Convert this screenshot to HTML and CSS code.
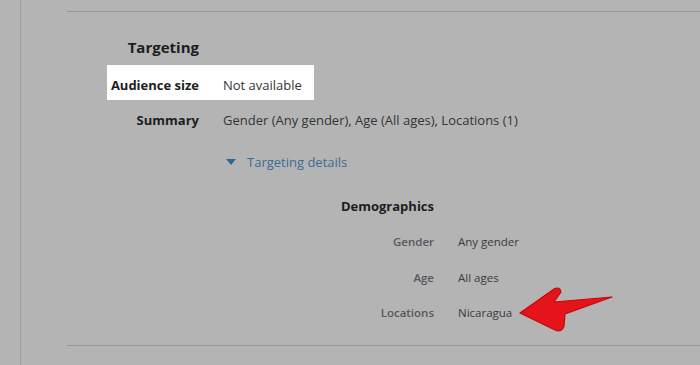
FILE: index.html
```html
<!DOCTYPE html>
<html lang="en">
<head>
    <meta charset="UTF-8">
    <meta name="viewport" content="width=device-width, initial-scale=1.0">
    <title>Targeting</title>
    <link rel="stylesheet" href="styles.css">
</head>
<body>
    <div class="panel">
        <div class="section">
            <div class="row heading">
                <div class="label">Targeting</div>
            </div>
            <div class="row highlight">
                <div class="label">Audience size</div>
                <div class="value">Not available</div>
            </div>
            <div class="row summary">
                <div class="label">Summary</div>
                <div class="value">Gender (Any gender), Age (All ages), Locations (1)</div>
            </div>
            <div class="row">
                <div class="label"></div>
                <div class="value">
                    <a class="toggle" href="#"><span class="caret"></span>Targeting details</a>
                </div>
            </div>
            <div class="row">
                <div class="label"></div>
                <div class="details">
                    <div class="drow dheading">
                        <div class="dlabel">Demographics</div>
                    </div>
                    <div class="drow">
                        <div class="dlabel">Gender</div>
                        <div class="dvalue">Any gender</div>
                    </div>
                    <div class="drow">
                        <div class="dlabel">Age</div>
                        <div class="dvalue">All ages</div>
                    </div>
                    <div class="drow">
                        <div class="dlabel">Locations</div>
                        <div class="dvalue pointed">Nicaragua
                            <svg class="arrow" width="100" height="50" viewBox="0 0 100 50">
                                <path d="M4 27 L38 3 Q44 0 45 6 L38 16 L96 11 L49 28 L48 40 Q46 47 39 44 Z" fill="#e5141a" stroke="#c4080d" stroke-width="1.2" stroke-linejoin="round"/>
                            </svg>
                        </div>
                    </div>
                </div>
            </div>
        </div>
    </div>
</body>
</html>
```

FILE: styles.css
```css
body {
    margin: 0;
    background-color: #b4b4b4;
    font-family: "Open Sans", "Noto Sans", sans-serif;
    color: #1e1f21;
}

.panel {
    margin-left: 20px;
    height: 365px;
    border-left: 1px solid #9d9d9d;
    padding-top: 11px;
    box-sizing: border-box;
}

.section {
    margin-left: 46px;
    border-top: 1px solid #989898;
    border-bottom: 1px solid #989898;
    padding-top: 17px;
    height: 335px;
    box-sizing: border-box;
}

.row {
    display: grid;
    grid-template-columns: 132px auto;
    column-gap: 24px;
    align-items: center;
    min-height: 36px;
    font-size: 13px;
}

.label {
    text-align: right;
    font-weight: 700;
    color: #1c1d1f;
}

.value {
    color: #333538;
}

.heading .label {
    font-size: 15px;
}

.highlight {
    width: fit-content;
    margin-left: 40px;
    grid-template-columns: 92px auto;
    padding: 4px 12px 0 0;
    background-color: #ffffff;
    height: 35px;
    min-height: 0;
    box-sizing: border-box;
}

.summary {
    height: 40px;
}

.toggle {
    display: flex;
    align-items: center;
    gap: 11px;
    margin-left: 3px;
    color: #3a6c96;
    text-decoration: none;
    height: 44px;
}

.caret {
    width: 0;
    height: 0;
    border-left: 5px solid transparent;
    border-right: 5px solid transparent;
    border-top: 6px solid #2f6797;
}

.details {
    display: flex;
    flex-direction: column;
    margin-top: 4px;
}

.drow {
    display: grid;
    grid-template-columns: 211px auto;
    column-gap: 24px;
    align-items: center;
    height: 35.7px;
    font-size: 11.5px;
}

.dlabel {
    text-align: right;
    color: #56595e;
    font-weight: 600;
}

.dheading .dlabel {
    font-size: 13px;
    font-weight: 700;
    color: #1c1d1f;
}

.dvalue {
    color: #3a3b3e;
}

.pointed {
    position: relative;
}

.arrow {
    position: absolute;
    left: 58px;
    top: -19px;
}
```
